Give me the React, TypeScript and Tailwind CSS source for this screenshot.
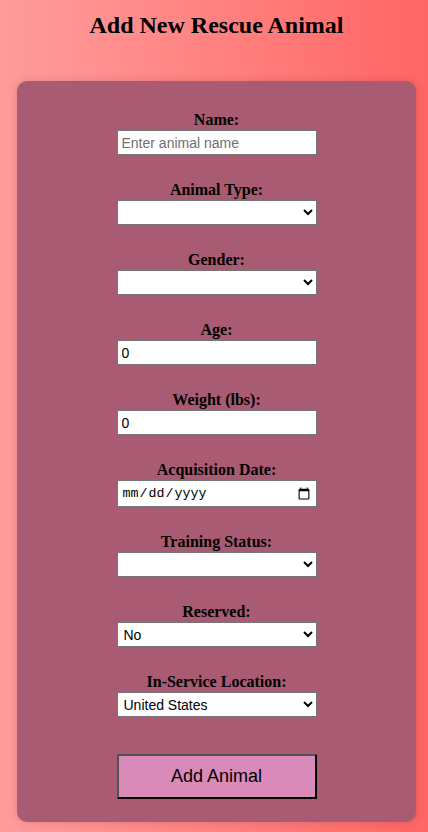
import React from "react";

const serif = { fontFamily: '"Liberation Serif", "Times New Roman", serif' };

function Label({ children }: { children: React.ReactNode }) {
  return (
    <label className="block h-[18px] text-[16px] leading-[18px] font-bold text-black text-center">
      {children}
    </label>
  );
}

const fieldCls =
  "block w-[200px] h-[25px] mt-[1px] bg-white border border-[#767676] text-[14px] text-black px-[4px] font-['Liberation_Sans',Arial,sans-serif]";

const selectCls =
  "block w-[200px] h-[25px] mt-[1px] bg-white border border-[#767676] text-[14px] text-black px-[2px] font-['Liberation_Sans',Arial,sans-serif]";

export default function App() {
  return (
    <div
      className="min-h-[832px] w-full bg-gradient-to-r from-[#ff9c9c] to-[#ff6565] pt-[12px] pb-[10px]"
      style={serif}
    >
      <h2 className="pl-[5px] text-[24px] leading-[27px] font-bold text-center text-black">
        Add New Rescue Animal
      </h2>
      <div className="ml-[17px] mt-[42px] w-[399px] rounded-[10px] bg-[#a85b72] shadow-[0_0_8px_rgba(0,0,0,0.15)] pt-[30px] pb-[23px] flex flex-col items-center">
        <div className="flex flex-col items-center gap-[26px]">
          <div className="flex flex-col items-center">
            <Label>Name:</Label>
            <input className={fieldCls + " placeholder:text-[#6f6f6f]"} placeholder="Enter animal name" />
          </div>
          <div className="flex flex-col items-center">
            <Label>Animal Type:</Label>
            <select className={selectCls} defaultValue="">
              <option value=""></option>
            </select>
          </div>
          <div className="flex flex-col items-center">
            <Label>Gender:</Label>
            <select className={selectCls} defaultValue="">
              <option value=""></option>
            </select>
          </div>
          <div className="flex flex-col items-center">
            <Label>Age:</Label>
            <input className={fieldCls} type="number" defaultValue={0} />
          </div>
          <div className="flex flex-col items-center">
            <Label>Weight (lbs):</Label>
            <input className={fieldCls} type="number" defaultValue={0} />
          </div>
          <div className="flex flex-col items-center">
            <Label>Acquisition Date:</Label>
            <input
              type="date"
              className="block w-[200px] h-[27px] mt-[1px] bg-white border border-[#767676] text-[13.333px] text-black pl-[4px] pr-[3px] font-['Liberation_Mono',monospace]"
            />
          </div>
          <div className="flex flex-col items-center">
            <Label>Training Status:</Label>
            <select className={selectCls} defaultValue="">
              <option value=""></option>
            </select>
          </div>
          <div className="flex flex-col items-center">
            <Label>Reserved:</Label>
            <select className={selectCls} defaultValue="No">
              <option>No</option>
              <option>Yes</option>
            </select>
          </div>
          <div className="flex flex-col items-center">
            <Label>In-Service Location:</Label>
            <select className={selectCls} defaultValue="United States">
              <option>United States</option>
            </select>
          </div>
        </div>
        <button className="mt-[37px] w-[200px] h-[45px] bg-[#da8ab8] border-2 border-t-[#505050] border-l-[#505050] border-r-black border-b-black text-[18px] text-black font-['Liberation_Sans',Arial,sans-serif]">
          Add Animal
        </button>
      </div>
    </div>
  );
}
